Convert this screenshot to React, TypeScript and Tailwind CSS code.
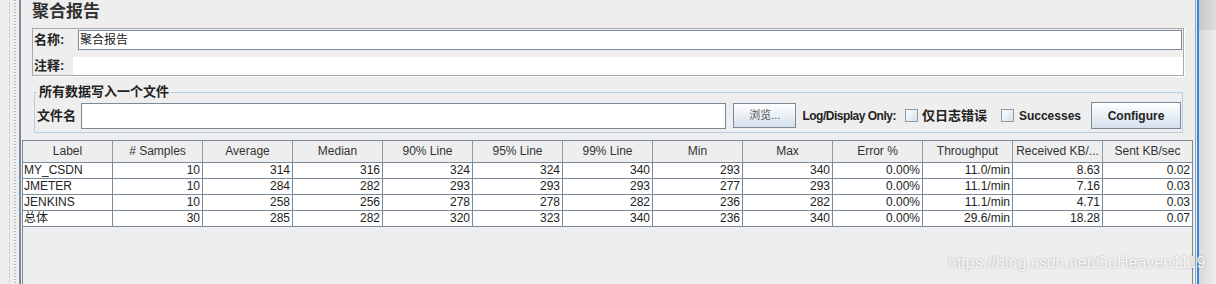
const columns = [
  'Label',
  '# Samples',
  'Average',
  'Median',
  '90% Line',
  '95% Line',
  '99% Line',
  'Min',
  'Max',
  'Error %',
  'Throughput',
  'Received KB/...',
  'Sent KB/sec',
];

const rows: string[][] = [
  ['MY_CSDN', '10', '314', '316', '324', '324', '340', '293', '340', '0.00%', '11.0/min', '8.63', '0.02'],
  ['JMETER', '10', '284', '282', '293', '293', '293', '277', '293', '0.00%', '11.1/min', '7.16', '0.03'],
  ['JENKINS', '10', '258', '256', '278', '278', '282', '236', '282', '0.00%', '11.1/min', '4.71', '0.03'],
  ['总体', '30', '285', '282', '320', '323', '340', '236', '340', '0.00%', '29.6/min', '18.28', '0.07'],
];

function Checkbox() {
  return (
    <span className="inline-block h-[13px] w-[13px] shrink-0 border border-[#8a9aab] bg-gradient-to-br from-white to-[#d3dfeb]" />
  );
}

export default function App() {
  return (
    <div className="relative flex h-[284px] w-[1216px] overflow-hidden bg-[#eeeeee] font-['Liberation_Sans','Noto_Sans_CJK_SC',sans-serif] text-[#222]">
      {/* left gutter */}
      <div className="flex h-full w-[22px] shrink-0">
        <div className="w-[10px] border-r border-[#d4d4d4]" />
        <div className="w-[4px]" />
        <div className="w-[2px] bg-[repeating-linear-gradient(to_bottom,#b9b9b9_0px,#b9b9b9_1px,transparent_1px,transparent_3px)]" />
        <div className="w-[3px]" />
        <div className="w-[2px] bg-[#7a8a99]" />
        <div className="w-[1px]" />
      </div>

      {/* main */}
      <div className="flex w-[1171px] shrink-0 flex-col">
        <div className="h-[28px] pl-[10px] text-[17px] leading-[24px] font-bold text-[#333]">聚合报告</div>

        {/* name / comment */}
        <div className="ml-[10px] h-[48px] w-[1152px] border border-[#a9a9a9] shadow-[1px_1px_0_#ffffff]">
          <div className="flex pt-[1px] pr-[1px]">
            <span className="w-[45px] pl-[1px] text-[13px] leading-[20px] font-bold">名称:</span>
            <div className="flex h-[20px] flex-1 items-center border border-[#7a8a99] bg-white pl-[1px] text-[12px]">
              聚合报告
            </div>
          </div>
          <div className="mt-[7px] flex">
            <span className="w-[40px] pl-[1px] text-[13px] leading-[18px] font-bold">注释:</span>
            <div className="h-[18px] flex-1 bg-white" />
          </div>
        </div>

        {/* file fieldset */}
        <fieldset className="mt-[8px] ml-[12px] w-[1149px] border border-[#b8cfe5] pb-[3px]">
          <legend className="ml-[2px] px-[2px] text-[13px] leading-[16px] font-bold">所有数据写入一个文件</legend>
          <div className="flex items-center pt-[2px] pr-[1px] pl-[2px]">
            <span className="text-[13px] font-bold">文件名</span>
            <div className="ml-[5px] h-[26px] flex-1 border border-[#7a8a99] bg-white" />
            <button className="ml-[7px] h-[25px] w-[63px] border border-[#7a8a99] bg-gradient-to-b from-white to-[#d4e0ec] text-[11px] text-[#555]">
              浏览...
            </button>
            <span className="ml-[6px] text-[12px] font-bold tracking-[-0.5px]">Log/Display Only:</span>
            <span className="ml-[9px] flex">
              <Checkbox />
            </span>
            <span className="ml-[4px] text-[13px] font-bold">仅日志错误</span>
            <span className="ml-[14px] flex">
              <Checkbox />
            </span>
            <span className="ml-[5px] text-[12px] font-bold">Successes</span>
            <button className="ml-[10px] h-[27px] w-[90px] border border-[#7a8a99] bg-gradient-to-b from-white to-[#d4e0ec] text-[12px] font-bold">
              Configure
            </button>
          </div>
        </fieldset>

        {/* results table */}
        <div className="mt-[7px] flex-1 border-x border-t border-[#7a8a99]">
          <div className="flex h-[22px] border-b border-[#7a8a99] bg-[#eeeeee]">
            {columns.map((c, i) => (
              <div
                key={c}
                className={
                  i === columns.length - 1
                    ? 'w-[89px] text-center text-[12px] leading-[21px] text-[#333]'
                    : 'w-[90px] border-r border-[#8b99a8] text-center text-[12px] leading-[21px] text-[#333]'
                }
              >
                {c}
              </div>
            ))}
          </div>
          {rows.map((r) => (
            <div key={r[0]} className="flex h-[16px] border-b border-[#7a8a99] bg-white">
              {r.map((v, i) => (
                <div
                  key={i}
                  className={
                    i === 0
                      ? 'w-[90px] border-r border-[#7a8a99] pl-[1px] text-[12px] leading-[15px]'
                      : i === r.length - 1
                        ? 'w-[89px] pr-[2px] text-right text-[12px] leading-[15px]'
                        : 'w-[90px] border-r border-[#7a8a99] pr-[2px] text-right text-[12px] leading-[15px]'
                  }
                >
                  {v}
                </div>
              ))}
            </div>
          ))}
        </div>
      </div>

      {/* right edge */}
      <div className="w-[2px] shrink-0" />
      <div className="w-[1px] shrink-0 bg-[#9aa3ad]" />
      <div className="w-[1px] shrink-0" />
      <div className="w-[2px] shrink-0 bg-[#2f8ae0]" />
      <div className="flex w-[17px] shrink-0 flex-col">
        <div className="h-[30px] bg-gradient-to-r from-[#c8c8c8] to-[#dcdcdc]" />
        <div className="flex-1 bg-gradient-to-r from-[#d9d9d9] to-[#ededed]" />
      </div>

      {/* watermark */}
      <span className="absolute top-[254px] left-[948px] text-[16px] leading-[18px] text-white/90 [text-shadow:0_0_2px_rgba(0,0,0,0.35)]">
        https://blog.csdn.net/GoHeaven1119
      </span>
    </div>
  );
}
